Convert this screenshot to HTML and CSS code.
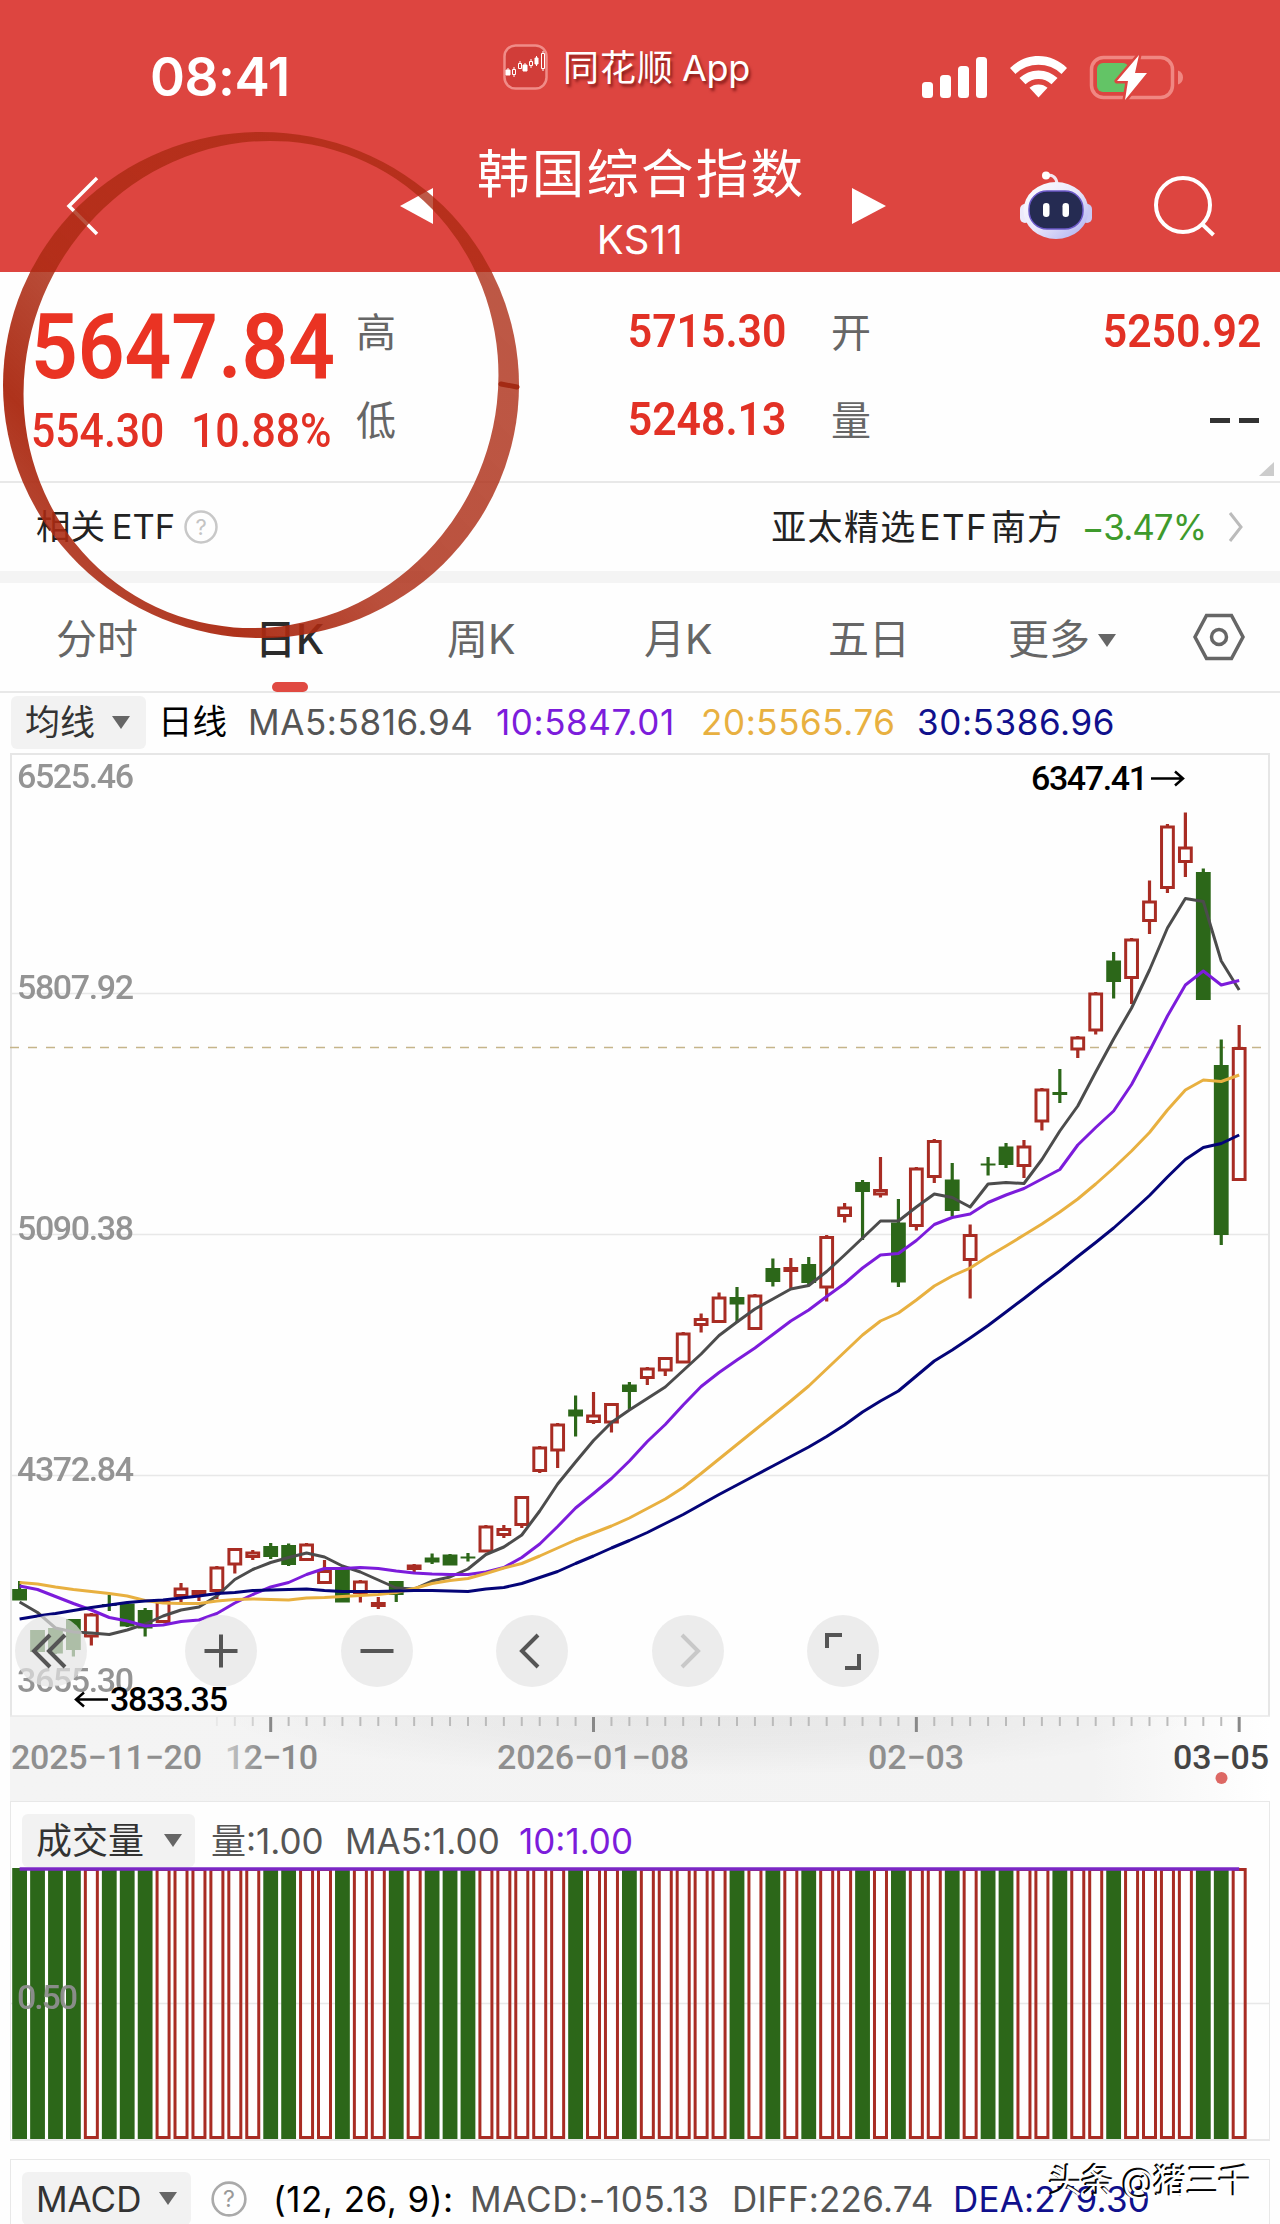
FILE: index.html
```html
<!DOCTYPE html>
<html lang="zh-CN">
<head>
  <meta charset="UTF-8">
  <meta name="viewport" content="width=device-width, initial-scale=1.0">
  <title>韩国综合指数 KS11</title>
  <link rel="stylesheet" href="styles.css">
</head>
<body>

  <div class="page">
    <header class="header">
      <div class="status">
        <span class="time">08:41</span>
        <div class="app-label">
          <svg class="app-icon" width="46" height="48" viewBox="0 0 46 48">
            <rect x="1.500" y="1.500" width="42" height="43" rx="11" fill="#d13d39" stroke="#f08c88" stroke-width="2.500"/>
            <g fill="#fff" stroke="#fff" stroke-width="1">
              <path d="M3 26h4v5h-4zM20 21h4v6h-4zM32 14h3v6h-3z"/>
              <path d="M5 24v2M22 19v2M33.500 12v10" />
            </g>
            <g fill="none" stroke="#fff" stroke-width="1">
              <path d="M9.500 25.500h3v5h-3zM15.500 19.500h3v5h-3zM26.500 17.500h3v4h-3zM38.500 9.500h3v15h-3z"/>
              <path d="M11 23v2M11 31v2M17 17v2M28 15v2M28 22v2M40 7v2M40 25v2"/>
            </g>
          </svg>
          <span class="app-cn">同花顺</span><span class="app-en">App</span>
        </div>
        <svg class="status-icons" width="264" height="50" viewBox="920 50 264 50">
          <g fill="#fff">
            <rect x="922" y="80" width="11" height="16" rx="3.500"/>
            <rect x="940" y="73" width="11" height="23" rx="3.500"/>
            <rect x="958" y="64" width="11" height="32" rx="3.500"/>
            <rect x="976" y="55" width="11" height="41" rx="3.500"/>
            <path d="M1038.500 54c11 0 21 4.500 28.500 12l-5.500 6a33 33 0 0 0-46 0l-5.500-6c7.500-7.500 17.500-12 28.500-12z"/>
            <path d="M1038.500 68.500c7.500 0 14 3 19 7.500l-6 6.200a19 19 0 0 0-26 0l-6-6.200c5-4.500 11.500-7.500 19-7.500z"/>
            <path d="M1038.500 82.500c3.500 0 6.500 1.200 9 3.300l-9 9.700-9-9.700c2.500-2.100 5.500-3.300 9-3.300z"/>
          </g>
          <rect x="1091.500" y="55.500" width="81" height="40" rx="12" fill="none" stroke="#f08782" stroke-width="3.500"/>
          <path d="M1178 68.500c3 1 5 3.500 5 7s-2 6-5 7z" fill="#f08782"/>
          <rect x="1097" y="61" width="32" height="29" rx="6" fill="#63c466"/>
          <path d="M1139 53l-22 26h11l-3 19 22-27h-12z" fill="#fff" stroke="#dd4540" stroke-width="5" paint-order="stroke" stroke-linejoin="round"/>
        </svg>
      </div>

      <nav class="nav">
        <svg class="back" width="34" height="62" viewBox="0 0 34 62"><path d="M31 3L3 31l28 28" fill="none" stroke="#fff" stroke-width="3.500"/></svg>
        <svg width="33" height="38" viewBox="0 0 33 38"><path d="M33 1v36L0 19z" fill="#fff"/></svg>
        <div class="title">
          <h1>韩国综合指数</h1>
          <span>KS11</span>
        </div>
        <svg class="next" width="34" height="38" viewBox="0 0 34 38"><path d="M0 1v36l34-18z" fill="#fff"/></svg>
        <svg class="robot" width="72" height="70" viewBox="0 0 72 70">
          <defs>
            <linearGradient id="shell" x1="0" y1="0" x2="1" y2="1">
              <stop offset="0" stop-color="#fff"/>
              <stop offset="0.500" stop-color="#e9e6fa"/>
              <stop offset="1" stop-color="#a9adf0"/>
            </linearGradient>
          </defs>
          <path d="M26 6c6-2 10 1 11 7" fill="none" stroke="#f3e6ee" stroke-width="3"/>
          <circle cx="26" cy="5.500" r="4" fill="#fff"/>
          <rect x="0" y="34" width="10" height="19" rx="5" fill="#eceafb"/>
          <rect x="62" y="34" width="10" height="19" rx="5" fill="#c9c9f4"/>
          <ellipse cx="36" cy="40.500" rx="32.500" ry="28.500" fill="url(#shell)"/>
          <rect x="9" y="21" width="54" height="38" rx="18" fill="#252b52" stroke="#6b58c8" stroke-width="1.500"/>
          <rect x="23" y="33" width="6.500" height="14" rx="3.200" fill="#fff"/>
          <rect x="42.500" y="33" width="6.500" height="14" rx="3.200" fill="#fff"/>
        </svg>
        <svg class="search" width="62" height="64" viewBox="0 0 62 64">
          <g fill="none" stroke="#fff" stroke-width="4"><circle cx="29" cy="31" r="27"/><path d="M48 50l11.500 11"/></g>
        </svg>
      </nav>
    </header>

    <section class="quote">
      <div class="price">
        <strong>5647.84</strong>
        <div class="change"><span>554.30</span><span>10.88%</span></div>
      </div>
      <div class="stat">
        <div><label>高</label><b>5715.30</b></div>
        <div><label>低</label><b>5248.13</b></div>
      </div>
      <div class="stat">
        <div><label>开</label><b>5250.92</b></div>
        <div><label>量</label><b class="none"><i></i><i></i></b></div>
      </div>
      <span class="corner"></span>
    </section>

    <section class="etf">
      <span class="etf-label">相关 ETF</span>
      <svg class="help" width="36" height="36" viewBox="0 0 36 36">
        <circle cx="18" cy="18" r="15.500" fill="none" stroke="#c8c8c8" stroke-width="2.500"/>
        <text x="18" y="26" text-anchor="middle">?</text>
      </svg>
      <span class="etf-name">亚太精选 ETF 南方</span>
      <span class="etf-change">−3.47%</span>
      <svg class="etf-go" width="16" height="32" viewBox="0 0 16 32"><path d="M2 2l11 14L2 30" fill="none" stroke="#bbb" stroke-width="3"/></svg>
    </section>

    <section class="tabs">
      <span>分时</span>
      <span class="active">日K</span>
      <span>周K</span>
      <span>月K</span>
      <span>五日</span>
      <span>更多<i class="caret"></i></span>
      <svg width="54" height="48" viewBox="0 0 54 48">
        <g fill="none" stroke="#666" stroke-width="3.500"><path d="M14.500 2.500h25L51 24 39.500 45.500h-25L3 24z"/><circle cx="27" cy="24" r="7.500"/></g>
      </svg>
    </section>

    <section class="legend ma">
      <span class="select">均线<i class="caret"></i></span>
      <span class="black cn">日线</span>
      <span class="grey l1">MA5:5816.94</span>
      <span class="purple l2">10:5847.01</span>
      <span class="orange l3">20:5565.76</span>
      <span class="navy l4">30:5386.96</span>
    </section>

    <section class="chart">
      <svg id="kline" width="1280" height="1048" viewBox="0 753 1280 1048">
        <defs>
          <linearGradient id="axisFade" x1="0" x2="1">
            <stop offset="0" stop-color="#f4f4f4"/>
            <stop offset="0.860" stop-color="#f3f3f3"/>
            <stop offset="1" stop-color="#fff"/>
          </linearGradient>
          <radialGradient id="axisShade" cx="0.500" cy="0" r="0.500" gradientTransform="translate(0 0) scale(1 2)">
            <stop offset="0" stop-color="#000" stop-opacity="0.050"/>
            <stop offset="0.500" stop-color="#000" stop-opacity="0.035"/>
            <stop offset="1" stop-color="#000" stop-opacity="0"/>
          </radialGradient>
          <linearGradient id="dateFade" gradientUnits="userSpaceOnUse" x1="222" x2="262" y1="0" y2="0">
            <stop offset="0" stop-color="#d0d0d0"/>
            <stop offset="1" stop-color="#8a8a8a"/>
          </linearGradient>
        </defs>
        <rect x="10" y="1716" width="1260" height="85" fill="url(#axisFade)"/>
        <rect x="220" y="1716" width="980" height="60" fill="url(#axisShade)"/>
        <path class="grid" d="M10 993.500H1270M10 1234.500H1270M10 1475.500H1270"/>
        <path class="frame" d="M11 1716V754H1269V1716"/>
        <path class="grid" d="M10 1716H1270"/>
        <path class="last" d="M10 1047.500H1270"/>
        <g id="candles"></g>
        <g id="lines"></g>
        <g id="ticks"></g>
        <g class="scale">
          <text x="17" y="788" textLength="117">6525.46</text>
          <text x="17" y="999" textLength="117">5807.92</text>
          <text x="17" y="1240" textLength="117">5090.38</text>
          <text x="17" y="1481" textLength="117">4372.84</text>
          <text x="17" y="1692" textLength="117">3655.30</text>
        </g>
        <g class="mark">
          <text x="1031" y="790" textLength="117">6347.41</text>
          <path d="M1151 778.500h32M1175 771.500l8 7-8 7"/>
          <text x="110" y="1711" textLength="118">3833.35</text>
          <path d="M108 1699.500H76M84 1692.500l-8 7 8 7"/>
        </g>
        <g class="dates">
          <text x="11" y="1769" textLength="191">2025−11−20</text>
          <text x="225" y="1769" textLength="93" fill="url(#dateFade)">12−10</text>
          <text x="497" y="1769" textLength="192">2026−01−08</text>
          <text x="868" y="1769" textLength="96">02−03</text>
          <text x="1173" y="1769" textLength="96" class="today">03−05</text>
        </g>
        <circle cx="1221.500" cy="1778" r="6" fill="#dd6864"/>
      </svg>

      <div class="tools">
        <button><svg viewBox="0 0 72 72"><path d="M35 20L19 36l16 16M50 20L34 36l16 16"/></svg></button>
        <button><svg viewBox="0 0 72 72"><path d="M36 19.500v33M19.500 36h33"/></svg></button>
        <button><svg viewBox="0 0 72 72"><path d="M19.500 36h33"/></svg></button>
        <button><svg viewBox="0 0 72 72"><path d="M42 20L26 36l16 16"/></svg></button>
        <button class="off"><svg viewBox="0 0 72 72"><path d="M30 20l16 16-16 16"/></svg></button>
        <button><svg viewBox="0 0 72 72"><path d="M20 33V20h15M52 39v14H38"/></svg></button>
      </div>
    </section>

    <section class="panel">
      <div class="legend vol">
        <span class="select">成交量<i class="caret"></i></span>
        <span class="grey v1">量:1.00</span>
        <span class="grey v2">MA5:1.00</span>
        <span class="purple v3">10:1.00</span>
      </div>
      <svg id="volume" width="1258" height="274" viewBox="11 1866 1258 274"></svg>
    </section>

    <section class="panel last-panel">
      <div class="legend macd">
        <span class="select">MACD<i class="caret"></i></span>
        <svg class="help dark" width="38" height="38" viewBox="0 0 36 36">
          <circle cx="18" cy="18" r="15.500" fill="none" stroke="#aaa" stroke-width="2.500"/>
          <text x="18" y="26" text-anchor="middle">?</text>
        </svg>
        <span class="black m1">(12, 26, 9):</span>
        <span class="grey m2">MACD:-105.13</span>
        <span class="grey m3">DIFF:226.74</span>
        <span class="navy m4">DEA:279.30</span>
      </div>
      <div class="watermark">头条 @猪三千</div>
    </section>

    <!-- hand-drawn ring round the price -->
    <svg class="ring" width="540" height="660" viewBox="0 0 540 660">
      <defs>
        <linearGradient id="ink" x1="1" y1="0.300" x2="0.250" y2="1">
          <stop offset="0" stop-color="#ab2a12" stop-opacity="0.780"/>
          <stop offset="0.600" stop-color="#ab2a12" stop-opacity="0.820"/>
          <stop offset="0.850" stop-color="#ab2a12" stop-opacity="0.960"/>
          <stop offset="1" stop-color="#ab2a12" stop-opacity="0.860"/>
        </linearGradient>
        <mask id="hole">
          <rect width="540" height="660" fill="#fff"/>
          <ellipse cx="261" cy="384.500" rx="246" ry="235" transform="rotate(-62 261 384.500)" fill="#000"/>
        </mask>
      </defs>
      <ellipse cx="261" cy="385" rx="258" ry="253" fill="url(#ink)" mask="url(#hole)"/>
      <path d="M501 384l16 3" stroke="#a32a14" stroke-width="5" stroke-linecap="round"/>
    </svg>
  </div>

  <script src="chart.js"></script>

</body>
</html>
```

FILE: styles.css
```css
* {
  margin: 0;
  padding: 0;
  box-sizing: border-box;
}

body {
  font-family: Inter, "Noto Sans CJK SC", sans-serif;
  background-color: #fefefe;
  color: #333;
}

.page {
  position: relative;
  width: 1280px;
  height: 2224px;
  overflow: hidden;
}

.page svg {
  display: block;
}

span {
  white-space: nowrap;
}

/* header */
.header {
  height: 272px;
  background: #dd4540;
  color: #fff;
}

.status {
  display: grid;
  grid-template-columns: 352px 417px 264px;
  height: 110px;
  padding: 44px 0 0 151px;
  align-items: center;
}

.time {
  margin-left: -1px;
  font-size: 53px;
  font-weight: 600;
  line-height: 60px;
  letter-spacing: -0.4px;
}

.app-label {
  display: flex;
  align-items: center;
  margin-bottom: 18px;
  font-size: 36px;
  line-height: 48px;
  text-shadow: 2px 3px 3px rgba(80, 0, 0, 0.6);
}

.app-cn {
  margin-left: 14px;
  letter-spacing: 1px;
}

.app-en {
  margin-left: 8px;
  letter-spacing: -0.3px;
}

.nav {
  display: grid;
  grid-template-columns: 400px 78px 324px 218px 134px 126px;
  height: 162px;
  padding-top: 28px;
  align-items: center;
}

.back {
  margin-left: 66px;
}

.next {
  margin-left: 50px;
}

.robot {
  margin-top: -2px;
}

.title {
  text-align: center;
  margin-top: 3px;
}

.title h1 {
  margin-left: -1px;
  font-size: 52.500px;
  font-weight: 400;
  line-height: 66px;
  letter-spacing: 2.2px;
  white-space: nowrap;
}

.title span {
  display: block;
  font-size: 40px;
  line-height: 66px;
  letter-spacing: 0.4px;
}

/* quote */
.quote {
  position: relative;
  display: grid;
  grid-template-columns: 324px 430px 430px;
  height: 211px;
  padding: 17px 0 0 32px;
  border-bottom: 2px solid #e8e8e8;
  color: #e23125;
  font-family: Roboto, "Noto Sans CJK SC", sans-serif;
}

.price {
  padding-top: 13px;
}

/* the figures are set narrower than plain Roboto */
.price strong {
  display: block;
  width: max-content;
  margin-left: -1px;
  font-size: 91px;
  font-weight: 600;
  line-height: 90px;
  color: #ea3323;
  transform: scaleX(0.9);
  transform-origin: left;
}

.change {
  display: flex;
  justify-content: space-between;
  width: 334px;
  margin-top: 19px;
  margin-left: -1px;
  font-size: 47.500px;
  font-weight: 500;
  line-height: 40px;
  transform: scaleX(0.9);
  transform-origin: left;
}

.stat div {
  display: flex;
  justify-content: space-between;
  align-items: center;
  height: 88px;
}

.stat + .stat {
  margin-left: 45px;
  width: 430px;
}

.stat label {
  margin-top: -6px;
  font-size: 40px;
  color: #666;
}

.stat b {
  font-size: 47px;
  font-weight: 600;
  margin-top: -5px;
  transform: scaleX(0.91);
  transform-origin: right;
}

.stat .none {
  display: flex;
  gap: 9px;
  margin-right: 2px;
  margin-top: -2px;
  transform: none;
}

.none i {
  width: 20px;
  height: 5px;
  background: #333;
}

.corner {
  position: absolute;
  right: 6px;
  bottom: 5px;
  border-left: 15px solid transparent;
  border-bottom: 14px solid #ccc;
}

/* related ETF */
.etf {
  display: flex;
  align-items: center;
  height: 100px;
  padding: 0 36px 12px 36px;
  font-size: 34.500px;
  line-height: 50px;
  color: #222;
  box-shadow: inset 0 -12px #f4f4f4;
}

.etf-label {
  word-spacing: -3px;
}

.help {
  margin-left: 8px;
}

.help text {
  font-size: 22px;
  fill: #c4c4c4;
}

.help.dark text {
  fill: #999;
}

.etf-name {
  margin-left: auto;
  font-size: 35px;
  letter-spacing: 1.4px;
  word-spacing: -8.500px;
}

.etf-change {
  margin: 0 22px 0 18px;
  font-size: 35px;
  letter-spacing: -1px;
  color: #3e9a2c;
}

/* period tabs */
.tabs {
  display: grid;
  grid-template-columns: 199px 192px 197px 184px 180px 184px 54px;
  height: 110px;
  padding-left: 56px;
  align-items: center;
  border-bottom: 2px solid #e8e8e8;
  font-size: 41px;
  color: #666;
}

.tabs span {
  margin-top: -3px;
}

.tabs .active {
  position: relative;
  font-weight: 500;
  color: #2b2b2b;
}

.tabs .active::after {
  content: "";
  position: absolute;
  left: 17px;
  bottom: -26px;
  width: 36px;
  height: 10px;
  border-radius: 5px;
  background: #e04a42;
}

.caret {
  display: inline-block;
  border: 9px solid transparent;
  border-top: 13px solid #666;
  border-bottom: 0;
}

.tabs .caret {
  margin-left: 8px;
  vertical-align: 7px;
}

/* indicator legends */
.legend {
  display: grid;
  align-items: center;
  font-size: 35px;
  line-height: 52px;
}

.ma {
  grid-template-columns: 147px 90px 248px 205px 216px auto;
  height: 60px;
  padding: 0 0 2px 11px;
}

.l1, .l2, .l3, .l4 {
  letter-spacing: 0.600px;
}

.select {
  display: flex;
  align-items: center;
  justify-content: space-between;
  height: 53px;
  padding: 0 16px 0 14px;
  border-radius: 6px;
  background: #f2f2f2;
  color: #333;
}

.ma .select {
  width: 135px;
}

.black { color: #000; }
.grey { color: #555; }
.purple { color: #7c1cdb; }
.orange { color: #e8b040; }
.navy { color: #10108c; }

.cn {
  font-size: 34.500px;
}

/* k-line chart */
.chart {
  position: relative;
  height: 1048px;
}

.grid {
  fill: none;
  stroke: #e8e8e8;
  stroke-width: 1.5;
}

.frame {
  fill: none;
  stroke: #e6e6e6;
  stroke-width: 2;
}

.last {
  stroke: #c5b58a;
  stroke-width: 1.5;
  stroke-dasharray: 9 9;
}

.up {
  fill: #fefefe;
  stroke: #a82c23;
  stroke-width: 3;
}

.down {
  fill: #2c6719;
}

.wick-up {
  stroke: #a82c23;
  stroke-width: 3.2;
}

.wick-down {
  stroke: #2c6719;
  stroke-width: 3.2;
}

.line {
  fill: none;
  stroke-width: 3;
  stroke-linejoin: round;
}

.scale, .dates, .mark {
  font-family: Roboto, sans-serif;
  font-size: 34px;
  fill: #8f8f8f;
}

.scale {
  font-weight: 500;
  opacity: 0.95;
}

.dates {
  font-weight: 500;
  fill: #8f8f8f;
}

.dates .today {
  font-weight: 500;
  fill: #444;
}

.mark text {
  font-weight: 500;
  fill: #000;
}

.mark path {
  fill: none;
  stroke: #000;
  stroke-width: 2.5;
}

.tools {
  position: absolute;
  left: 15px;
  top: 862px;
  display: grid;
  grid-template-columns: 170px 156px 155px 156px 155px 72px;
}

.tools button {
  width: 72px;
  height: 72px;
  border: 0;
  border-radius: 50%;
  background: rgba(228, 228, 228, 0.7);
}

.tools path {
  fill: none;
  stroke: #555;
  stroke-width: 4;
}

.tools .off path {
  stroke: #c8c8c8;
}

/* volume and MACD */
.panel {
  position: relative;
  width: 1260px;
  height: 340px;
  margin-left: 10px;
  border: 2px solid #e8e8e8;
  border-width: 1px 1px 2px;
}

.vol {
  grid-template-columns: 189px 134px 174px auto;
  height: 64px;
  padding: 12px 0 0 11px;
}

.vol .select {
  width: 173px;
  padding-right: 13px;
  font-size: 36px;
}

.last-panel {
  height: 66px;
  margin-top: 18px;
  border-bottom: 0;
}

.macd {
  grid-template-columns: 182px 69px 197px 262px 221px auto;
  padding: 12px 0 0 11px;
}

.m1 {
  letter-spacing: 0.500px;
}

.m2 {
  letter-spacing: 0.700px;
}

.m3, .m4 {
  letter-spacing: 0.2px;
}

.macd .select {
  width: 169px;
  padding-right: 14px;
}

.macd .help {
  margin-left: 6px;
}

.watermark {
  position: absolute;
  right: 18px;
  top: 0;
  font-size: 33px;
  line-height: 42px;
  letter-spacing: -0.6px;
  color: #fff;
  text-shadow: -2px -1px 0 #000, -1px -2px 0 #111;
  white-space: nowrap;
}

.ring {
  position: absolute;
  left: 0;
  top: 0;
}
```

FILE: chart.js
```js
// [direction, body top, body bottom, high, low]
const candles = [
  ['d',1589,1600.5,1581,1600],['d',1630,1652,1630,1652],['d',1628,1653.5,1628,1654],['d',1619,1650,1619,1656.5],
  ['u',1613.5,1637.5,1613,1645.5],['d',1604,1606,1595,1611],['d',1603.5,1626.5,1603,1627],['d',1610,1628.5,1608,1636.5],
  ['u',1601,1623,1601,1623],['u',1587.5,1597,1583,1602],['u',1590,1596,1590,1601],['u',1566.5,1592,1566,1599],
  ['u',1548,1565.5,1548,1573.5],['u',1551.5,1558,1550,1560],['d',1546,1557,1543,1559],['d',1545,1565,1543.5,1566],
  ['u',1543.5,1561,1543,1561],['u',1570,1584,1560,1584],['d',1568.5,1602.5,1568,1602],['u',1580.5,1594,1580,1602.5],
  ['u',1602,1606,1597,1609],['d',1581,1595,1581,1602],['u',1564.5,1570,1564,1572],['d',1557.5,1562.5,1553.5,1564],
  ['d',1554.5,1565.5,1554,1565],['d',1556.5,1558.5,1553,1561.5],['u',1525.5,1552.5,1525,1552],['u',1528,1536,1525,1538],
  ['u',1496,1526,1496,1528],['u',1446.5,1472,1446,1473],['u',1423.5,1451.5,1423,1468],['d',1409.5,1416.5,1395.5,1436.5],
  ['u',1414.5,1423,1392,1424],['u',1403,1423.5,1403,1432.5],['d',1384.5,1392,1382,1409],['u',1367.5,1379,1367,1385],
  ['u',1357,1371.5,1357,1376],['u',1332.5,1363.5,1332,1363],['u',1318,1326,1313.5,1332.5],['u',1296.5,1323,1292.5,1323],
  ['d',1297,1304.5,1287,1322.5],['u',1294.5,1330,1294,1330],['d',1268,1282,1258.5,1286.5],['u',1267,1271.5,1258,1288.5],
  ['d',1264,1283,1257,1285],['u',1236,1288.5,1235,1301.5],['u',1206.5,1217,1203,1222.5],['d',1182,1192,1180,1240],
  ['u',1189,1195.5,1157,1197.5],['d',1222.5,1282.5,1199,1287],['u',1167.5,1227,1167,1230.5],['u',1140,1178,1139,1183],
  ['d',1179.5,1211,1163,1216.5],['u',1234,1261,1224.5,1298.5],['d',1163.5,1165.5,1157,1175.5],['d',1146.5,1165,1143,1168],
  ['u',1145.5,1167,1140,1178],['u',1088.5,1122.5,1088,1130.5],['d',1092,1095,1069,1103],['u',1036.5,1050.5,1036,1058],
  ['u',992.5,1031.5,992,1034.5],['d',960.5,982,952,998.5],['u',938.5,979,938,1004],['u',900.5,922,880.5,934],
  ['u',825.5,889,824,893],['u',846.5,863,812.5,877],['d',872,1000,868.5,1000],['d',1065,1235,1039.5,1245],
  ['u',1047,1181,1025,1181]
];

const averages = {
  '#4c4c4c': [1602,1612.5,1628,1632,1633,1634.5,1630,1624,1616,1610,1607,1596,1579.5,1569.5,1562.5,1557.5,1553,1557,1566,1572,1580,1588,1589,1581,1577,1569,1554.5,1547,1535,1511,1484,1462,1440.5,1422.5,1410,1398.5,1387,1370.5,1354,1335.5,1322,1309,1299,1289,1285.5,1271.5,1255,1238,1221,1221,1207,1194,1197.5,1207,1184,1182.5,1183.5,1159.5,1131,1106,1072,1039,1008,970,928,898.5,901.5,961,990],
  '#7c1cdb': [1586,1589.5,1596.5,1603.5,1610,1617.5,1621,1626,1625,1621.5,1620,1613.5,1603,1594.5,1587,1582.5,1574.5,1568.5,1568.5,1567.5,1568.5,1571,1573,1574,1574.5,1574.5,1572,1567.5,1557.5,1544,1526.5,1508,1493.5,1478.5,1461,1441.5,1424.5,1405,1386.5,1372.5,1360,1348,1334.5,1321,1310,1296.5,1283.5,1268,1255,1253.5,1240.5,1224.5,1217.5,1214,1202.5,1195,1188.5,1179,1169.5,1145,1127.5,1111,1084.5,1051,1016,985,971,985,980.5],
  '#e8b040': [1582.5,1584,1587,1589.5,1591.5,1593.5,1596,1600.5,1603,1603.5,1603.5,1601,1599.5,1599,1599.5,1600,1598,1597.5,1596.5,1595.5,1594.5,1592.5,1588.5,1583.5,1580.5,1578.5,1573.5,1568,1563.5,1556,1548,1540,1533,1526,1518,1508.5,1499,1487.5,1473.5,1459,1444.5,1430,1415.5,1401,1386,1369,1352,1335,1321,1313,1300,1286,1276,1268,1256.5,1246,1235,1224,1212,1199,1184,1168,1151,1132.5,1110,1090,1080,1081.5,1075],
  '#040478': [1619,1616,1613.5,1610.5,1607.5,1605,1602.5,1601,1600,1598,1596,1593.5,1592.5,1590.5,1590,1589.5,1589,1590.5,1591.5,1591.5,1591.5,1591,1590.5,1590.5,1591,1591.5,1589,1587.5,1583.5,1577.5,1571.5,1563.5,1556,1548,1540.5,1532.5,1523.5,1514.5,1504.5,1494.5,1485,1475.5,1466,1456.5,1447,1436.5,1425,1412,1401,1391,1376,1361,1350,1338,1325.5,1312,1298.5,1284.5,1271,1256.5,1242.5,1228,1212,1195.5,1177,1159.5,1147.5,1143.5,1135]
};

const xAt = i => 19.6 + i * 17.935;

// candlesticks
let body = '';
candles.forEach(([dir, top, bottom, high, low], i) => {
  const x = xAt(i);
  const cls = dir === 'u' ? 'up' : 'down';
  const inset = dir === 'u' ? 1.5 : 0;
  body += `<path class="wick-${cls}" d="M${x} ${high}V${low}"/>`;
  body += `<rect class="${cls}" x="${x - 7.4 + inset}" y="${top + inset}" width="${14.8 - inset * 2}" height="${Math.max(bottom - top - inset * 2, 2)}"/>`;
});
document.getElementById('candles').innerHTML = body;

// moving averages
document.getElementById('lines').innerHTML = Object.entries(averages).map(([color, ys]) =>
  `<polyline class="line" stroke="${color}" points="${ys.map((y, i) => xAt(i) + ',' + y).join(' ')}"/>`
).join('');

// time axis ticks, a long one every 18 days
let ticks = '';
for (let i = 11; i < candles.length; i++) {
  const major = (i - 14) % 18 === 0;
  const fade = Math.min(1, (i - 10) / 5);
  ticks += `<path d="M${xAt(i)} 1717v${major ? 15 : 9}" stroke="${major ? '#888' : '#bbb'}" stroke-width="${major ? 3 : 2}" opacity="${major ? 1 : fade}"/>`;
}
document.getElementById('ticks').innerHTML = ticks;

// volume bars
let bars = '<path class="grid" d="M11 2003.5H1269"/>';
candles.forEach(([dir], i) => {
  const x = xAt(i);
  bars += dir === 'u'
    ? `<rect class="up" fill-opacity="0" x="${x - 6}" y="1869.5" width="12" height="268"/>`
    : `<rect class="down" x="${x - 7.4}" y="1868" width="14.8" height="271"/>`;
});
bars += `<path d="M${xAt(0)} 1869H${xAt(68)}" stroke="#7b28c4" stroke-width="3.5"/>`;
bars += '<g class="scale"><text x="17" y="2009" textLength="61">0.50</text></g>';
document.getElementById('volume').innerHTML = bars;
```
